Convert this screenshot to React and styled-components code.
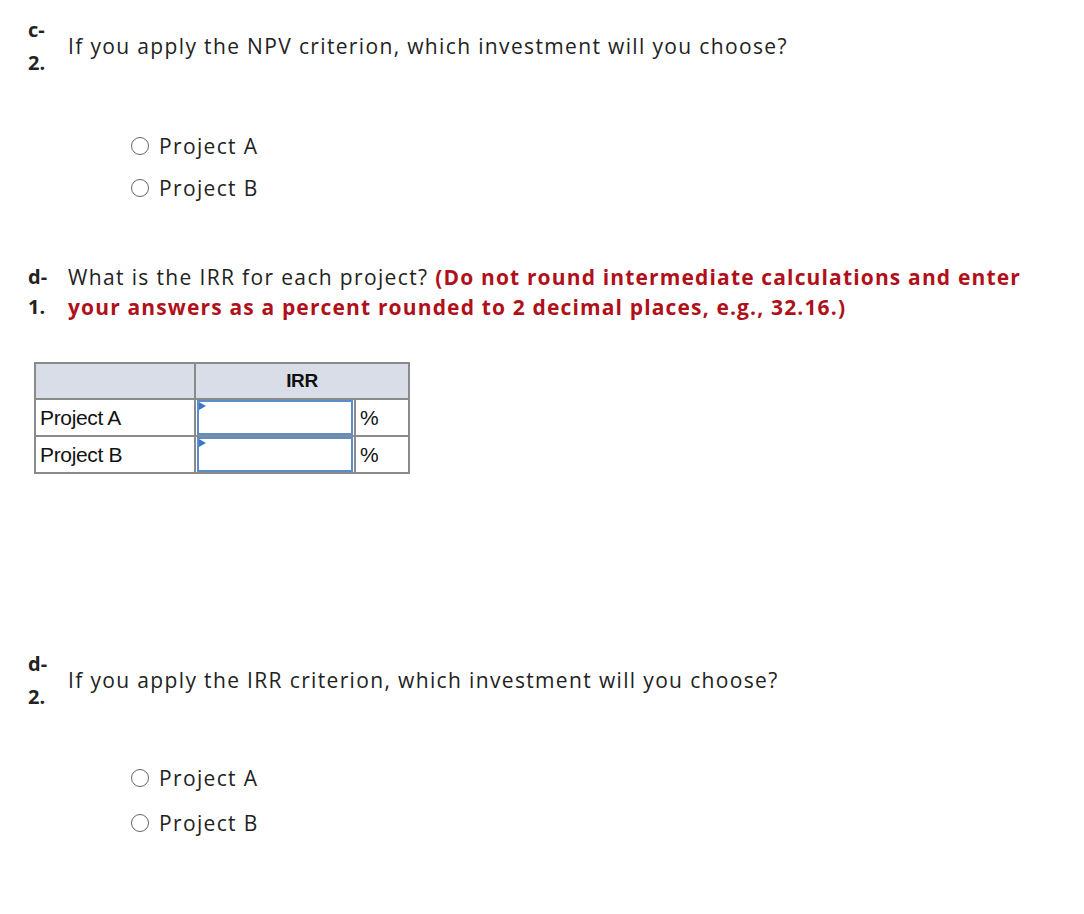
import React from "react"
import styled, { createGlobalStyle } from "styled-components"

const Global = createGlobalStyle`
  body {
    margin: 0;
    background: #fff;
    font-family: "Open Sans", "Lato", sans-serif;
    color: #222;
  }
`

const Page = styled.div`
  padding: 13px 0 40px 28px;
`

const Question = styled.div`
  display: flex;
  align-items: center;
  margin-top: ${(p) => p.$top || 0}px;
`

const Label = styled.div`
  width: 40px;
  font-weight: 700;
  font-size: 20px;
  line-height: 33px;
  flex-shrink: 0;
`

const Text = styled.div`
  font-size: 21px;
  line-height: 30px;
  letter-spacing: 1.35px;
`

const Inline = styled.div`
  display: flex;
  align-items: flex-start;
  margin-top: ${(p) => p.$top || 0}px;
`

const InlineLabel = styled.div`
  width: 40px;
  font-weight: 700;
  font-size: 20px;
  line-height: 30px;
  flex-shrink: 0;
`

const Hint = styled.span`
  color: #b0101a;
  font-weight: 700;
  letter-spacing: 1.15px;
`

const Options = styled.div`
  display: flex;
  flex-direction: column;
  gap: ${(p) => p.$gap}px;
  margin: ${(p) => p.$top}px 0 0 103px;
`

const Option = styled.label`
  display: flex;
  align-items: center;
  gap: 10px;
  font-size: 21px;
  line-height: 30px;
  letter-spacing: 1.35px;
`

const Radio = styled.span`
  width: 18px;
  height: 18px;
  border-radius: 50%;
  border: 1px solid #666;
  box-sizing: border-box;
`

const Table = styled.table`
  border-collapse: collapse;
  margin: 40px 0 0 6px;
  font-family: "Liberation Sans", Arial, sans-serif;
  font-size: 21px;
  letter-spacing: -0.35px;
  color: #111;
`

const Th = styled.th`
  background: #d9dde8;
  border: 2px solid #8a8a8a;
  height: 34px;
  width: ${(p) => p.$w}px;
  padding: 0;
  font-weight: 700;
  font-size: 19px;
`

const Td = styled.td`
  border: 2px solid #8a8a8a;
  height: 35px;
  padding: 0 4px;
  width: ${(p) => p.$w}px;
`

const InputCell = styled.td`
  border: 2px solid #8a8a8a;
  padding: 0;
  width: 158px;
`

const Input = styled.div`
  height: 35px;
  border: 2px solid #5b8dcc;
  box-sizing: border-box;
  margin: 0 1px;
  position: relative;
  &::before {
    content: "";
    position: absolute;
    left: 0;
    top: 0;
    border-left: 7px solid #3b78c4;
    border-top: 4px solid transparent;
    border-bottom: 4px solid transparent;
  }
`

const Choice = ({ top, gap }) => (
  <Options $top={top} $gap={gap}>
    <Option>
      <Radio />
      Project A
    </Option>
    <Option>
      <Radio />
      Project B
    </Option>
  </Options>
)

export default function App() {
  return (
    <>
      <Global />
      <Page>
        <Question>
          <Label>
            c-
            <br />
            2.
          </Label>
          <Text>If you apply the NPV criterion, which investment will you choose?</Text>
        </Question>
        <Choice top={52} gap={12} />

        <Inline $top={59}>
          <InlineLabel>
            d-
            <br />
            1.
          </InlineLabel>
          <Text>
            What is the IRR for each project?{" "}
            <Hint>
              (Do not round intermediate calculations and enter
              <br />
              your answers as a percent rounded to 2 decimal places, e.g., 32.16.)
            </Hint>
          </Text>
        </Inline>

        <Table>
          <thead>
            <tr>
              <Th $w={158} />
              <Th colSpan={2} $w={210}>
                IRR
              </Th>
            </tr>
          </thead>
          <tbody>
            <tr>
              <Td $w={150}>Project A</Td>
              <InputCell>
                <Input />
              </InputCell>
              <Td $w={44}>%</Td>
            </tr>
            <tr>
              <Td $w={150}>Project B</Td>
              <InputCell>
                <Input />
              </InputCell>
              <Td $w={44}>%</Td>
            </tr>
          </tbody>
        </Table>

        <Question $top={173}>
          <Label>
            d-
            <br />
            2.
          </Label>
          <Text>If you apply the IRR criterion, which investment will you choose?</Text>
        </Question>
        <Choice top={50} gap={15} />
      </Page>
    </>
  )
}
